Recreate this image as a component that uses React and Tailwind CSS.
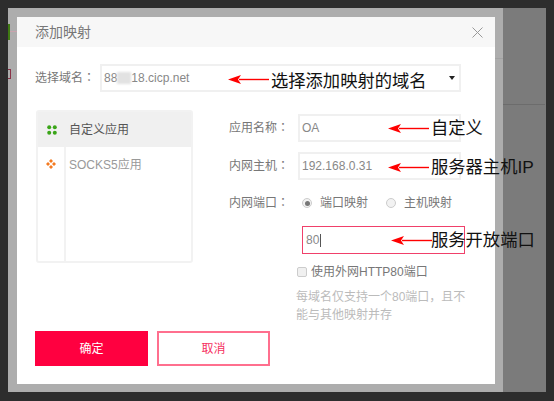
const COLON = 'font-["Liberation_Sans","Noto_Sans_CJK_TC",sans-serif]';

function Arrow({ className, width = 41 }) {
  return (
    <svg className={className} width={width} height="11" viewBox={`0 0 ${width} 11`}>
      <path d={`M11 5.5H${width}`} stroke="#ff0000" strokeWidth="1.4" />
      <path d="M0 5.5L13 1L10 5.5L13 10Z" fill="#ff0000" />
    </svg>
  );
}

function Note({ className, children }) {
  return (
    <div className={`absolute text-[17.3px] leading-6 text-[#111] whitespace-nowrap ${className}`}>
      {children}
    </div>
  );
}

function Label({ width, children }) {
  return (
    <span className={`${width} text-xs text-[#777] whitespace-nowrap`}>
      {children}
      <span className={COLON}>：</span>
    </span>
  );
}

function Field({ label, value }) {
  return (
    <div className="flex items-center h-7">
      <Label width="w-[69px]">{label}</Label>
      <div className="w-[163px] h-7 border-2 border-[#f0f0f0] pl-[2px] flex items-center text-xs text-[#888]">
        {value}
      </div>
    </div>
  );
}

function Radio({ checked, label }) {
  return (
    <div className="flex items-center gap-2">
      <span className="w-[10px] h-[10px] rounded-full border border-[#ccc] bg-[#f2f2f2] flex items-center justify-center">
        {checked && <span className="w-[5px] h-[5px] rounded-full bg-[#777]" />}
      </span>
      <span className="text-xs text-[#777]">{label}</span>
    </div>
  );
}

export default function App() {
  return (
    <div className='relative w-[554px] h-[401px] bg-[#2d2d2d] p-2 overflow-hidden font-["Liberation_Sans","Noto_Sans_CJK_SC",sans-serif]'>
      <div className="flex h-[384px]">
        {/* left strip and dialog */}
        <div className="w-[495px] bg-[#adadad] pl-[9px] pt-[9px] pb-2 shrink-0">
          <div className="w-[478px] h-[367px] bg-white flex flex-col">
            <div className="h-[30px] bg-[#f7f7f7] flex items-center justify-between pl-[18px] pr-[12px] shrink-0">
              <span className="text-[14px] text-[#777]">添加映射</span>
              <svg width="11" height="11" viewBox="0 0 11 11">
                <path d="M0.5 0.5L10.5 10.5M10.5 0.5L0.5 10.5" stroke="#999" strokeWidth="1" />
              </svg>
            </div>

            <div className="flex items-center pl-[18px] mt-[17px] h-7">
              <Label width="w-[65px]">选择域名</Label>
              <div className="w-[361px] h-7 border-2 border-[#f0f0f0] pl-[2px] pr-[4px] flex items-center justify-between text-xs text-[#888]">
                <span className="flex items-center">
                  88
                  <span className="w-[14px] h-[12px] bg-[#e2e2e2] blur-[1px]" />
                  18.cicp.net
                </span>
                <span className="w-0 h-0 border-x-[3.5px] border-x-transparent border-t-[4px] border-t-[#222]" />
              </div>
            </div>

            <div className="flex pl-[19px] mt-[18px]">
              <div className="w-[157px] h-[153px] border-2 border-[#f2f2f2] rounded-[3px] flex flex-col shrink-0">
                <div className="h-[35px] bg-[#f0f0f0] flex items-center shrink-0">
                  <div className="w-[27px] flex justify-center">
                    <svg width="10" height="10" viewBox="0 0 10 10" fill="#3aa518">
                      <circle cx="2.2" cy="2.2" r="2" />
                      <circle cx="7.8" cy="2.2" r="2" />
                      <circle cx="2.2" cy="7.8" r="2" />
                      <circle cx="7.8" cy="7.8" r="2" />
                    </svg>
                  </div>
                  <span className="text-xs text-[#555] ml-[4px]">自定义应用</span>
                </div>
                <div className="flex flex-1">
                  <div className="w-[28px] border-r-2 border-[#f2f2f2] flex justify-center pt-[12px] shrink-0">
                    <svg width="10" height="10" viewBox="0 0 10 10" fill="#f47a20">
                      <path d="M5 0L7 2L5 4L3 2Z" />
                      <path d="M5 6L7 8L5 10L3 8Z" />
                      <path d="M2 3L4 5L2 7L0 5Z" />
                      <path d="M8 3L10 5L8 7L6 5Z" />
                    </svg>
                  </div>
                  <span className="text-xs text-[#999] ml-[3px] mt-[10px] h-4">SOCKS5应用</span>
                </div>
              </div>

              <div className="flex flex-col ml-[36px] mt-[4px]">
                <Field label="应用名称" value="OA" />
                <div className="mt-[10px]">
                  <Field label="内网主机" value="192.168.0.31" />
                </div>
                <div className="flex items-center mt-[15px] h-[16px]">
                  <Label width="w-[73px]">内网端口</Label>
                  <Radio checked label="端口映射" />
                  <div className="ml-[18px]">
                    <Radio label="主机映射" />
                  </div>
                </div>
                <div className="ml-[73px] mt-[15px] w-[163px] h-[28px] border border-[#f0406a] pl-[3px] flex items-center text-xs text-[#888] shrink-0">
                  80
                  <span className="w-px h-[13px] bg-[#555] ml-px" />
                </div>
                <div className="flex items-center ml-[68px] mt-[10px]">
                  <span className="w-[10px] h-[10px] rounded-[2px] border border-[#ccc] bg-[#f0f0f0]" />
                  <span className="text-xs text-[#777] ml-[4px] whitespace-nowrap">使用外网HTTP80端口</span>
                </div>
                <div className="ml-[67px] mt-[8px] w-[176px] text-xs leading-[18px] text-[#bbb]">
                  每域名仅支持一个80端口，且不
                  <br />
                  能与其他映射并存
                </div>
              </div>
            </div>

            <div className="flex pl-[18px] gap-[9px] mt-auto mb-[18px]">
              <button className="w-[113px] h-[35px] bg-[#ff0040] text-xs text-white">确定</button>
              <button className="w-[113px] h-[35px] border-2 border-[#ff6f8e] bg-white text-xs text-[#f5305e]">取消</button>
            </div>
          </div>
        </div>
        {/* dimmed page behind */}
        <div className="flex-1 bg-[#7b7b7b]" />
      </div>

      {/* bits of the dimmed page showing around the dialog */}
      <div className="absolute left-2 top-6 w-[2px] h-4 bg-[#3f7a12]" />
      <div className="absolute left-[10px] top-[31px] w-[7px] h-px bg-[#c9a3ad]" />
      <div className="absolute left-2 top-[69px] w-[3px] h-[10px] border border-l-0 border-[#8a3348]" />
      <div className="absolute left-[503px] top-[104px] w-[42px] h-px bg-[#6c6c6c]" />
      <div className="absolute left-[495px] top-[58px] w-2 h-px bg-[#a2a2a2]" />

      {/* annotations drawn over the screenshot */}
      <Arrow className="absolute left-[228px] top-[74px]" />
      <Note className="left-[271px] top-[69px]">选择添加映射的域名</Note>
      <Arrow className="absolute left-[388px] top-[123px]" />
      <Note className="left-[431px] top-[116px]">自定义</Note>
      <Arrow className="absolute left-[388px] top-[162px]" />
      <Note className="left-[431px] top-[155px]">服务器主机IP</Note>
      <Arrow className="absolute left-[391px] top-[235px]" />
      <Note className="left-[431px] top-[228px]">服务开放端口</Note>
    </div>
  );
}
